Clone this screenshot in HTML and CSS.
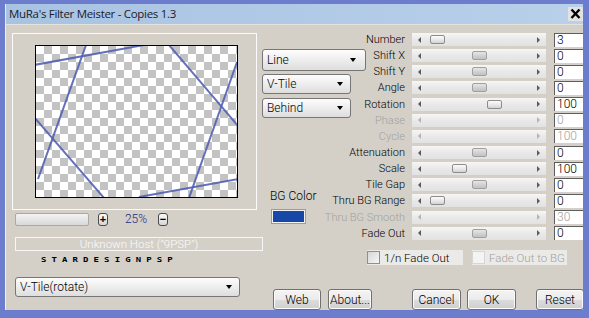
FILE: index.html
```html
<!DOCTYPE html>
<html>
<head>
<meta charset="utf-8">
<link rel="stylesheet" href="styles.css">
</head>
<body>
<div class="window">
  <div class="titlebar">
    <span class="title">MuRa's Filter Meister - Copies 1.3</span>
    <span class="close"><svg width="15" height="14" viewBox="0 0 15 14"><path d="M3.5 2.5 L11.5 11 M11.5 2.5 L3.5 11" stroke="#000" stroke-width="2.4" fill="none"/></svg></span>
  </div>
  <div class="client">
    <div class="left">
      <div class="frame">
        <div class="preview">
          <svg width="201" height="151" viewBox="0 0 201 151">
            <g stroke="#5360b2" stroke-width="2" stroke-opacity="0.9" fill="none">
              <line x1="-2" y1="19" x2="108" y2="-1"/>
              <line x1="50" y1="-1" x2="2" y2="133"/>
              <line x1="133" y1="-1" x2="202" y2="80"/>
              <line x1="201" y1="16" x2="153" y2="152"/>
              <line x1="-1" y1="72" x2="68" y2="152"/>
              <line x1="103" y1="151" x2="202" y2="133"/>
            </g>
          </svg>
        </div>
      </div>
      <div class="zoomrow">
        <div class="zoombar"></div>
        <span class="zbtn">+</span>
        <span class="zpct">25%</span>
        <span class="zbtn">&minus;</span>
      </div>
      <div class="host">Unknown Host ("9PSP")</div>
      <div class="brand">STARDESIGNPSP</div>
      <div class="select sel-wide">V-Tile(rotate)<i class="caret"></i></div>
    </div>
    <div class="right">
      <div class="upper">
        <div class="mid">
          <div class="select sel-line">Line<i class="caret"></i></div>
          <div class="select sel-s">V-Tile<i class="caret"></i></div>
          <div class="select sel-s sel-behind">Behind<i class="caret"></i></div>
          <div class="bg-label">BG Color</div>
          <div class="swatch"></div>
        </div>
        <div class="sliders">
          <div class="row"><span class="lbl">Number</span><div class="track"><i class="al"></i><i class="ar"></i><b class="thumb" style="left:18px"></b></div><span class="val">3</span></div>
          <div class="row"><span class="lbl">Shift X</span><div class="track"><i class="al"></i><i class="ar"></i><b class="thumb dark" style="left:60px"></b></div><span class="val">0</span></div>
          <div class="row"><span class="lbl">Shift Y</span><div class="track"><i class="al"></i><i class="ar"></i><b class="thumb dark" style="left:60px"></b></div><span class="val">0</span></div>
          <div class="row"><span class="lbl">Angle</span><div class="track"><i class="al"></i><i class="ar"></i><b class="thumb dark" style="left:60px"></b></div><span class="val">0</span></div>
          <div class="row"><span class="lbl">Rotation</span><div class="track"><i class="al"></i><i class="ar"></i><b class="thumb" style="left:75px"></b></div><span class="val">100</span></div>
          <div class="row dis"><span class="lbl">Phase</span><div class="track"><i class="al"></i><i class="ar"></i></div><span class="val">0</span></div>
          <div class="row dis"><span class="lbl">Cycle</span><div class="track"><i class="al"></i><i class="ar"></i></div><span class="val">100</span></div>
          <div class="row"><span class="lbl">Attenuation</span><div class="track"><i class="al"></i><i class="ar"></i><b class="thumb dark" style="left:60px"></b></div><span class="val">0</span></div>
          <div class="row"><span class="lbl">Scale</span><div class="track"><i class="al"></i><i class="ar"></i><b class="thumb" style="left:40px"></b></div><span class="val">100</span></div>
          <div class="row"><span class="lbl">Tile Gap</span><div class="track"><i class="al"></i><i class="ar"></i><b class="thumb dark" style="left:60px"></b></div><span class="val">0</span></div>
          <div class="row"><span class="lbl">Thru BG Range</span><div class="track"><i class="al"></i><i class="ar"></i><b class="thumb" style="left:18px"></b></div><span class="val">0</span></div>
          <div class="row dis"><span class="lbl">Thru BG Smooth</span><div class="track"><i class="al"></i><i class="ar"></i></div><span class="val">30</span></div>
          <div class="row"><span class="lbl">Fade Out</span><div class="track"><i class="al"></i><i class="ar"></i><b class="thumb dark" style="left:60px"></b></div><span class="val">0</span></div>
        </div>
      </div>
      <div class="checks">
        <label class="chk"><span class="box"></span>1/n Fade Out</label>
        <label class="chk chk-dis"><span class="box"></span>Fade Out to BG</label>
      </div>
      <div class="buttons">
        <span class="btn b-web">Web</span>
        <span class="btn b-about">About...</span>
        <span class="btn b-cancel">Cancel</span>
        <span class="btn b-ok">OK</span>
        <span class="btn b-reset">Reset</span>
      </div>
    </div>
  </div>
</div>
</body>
</html>
```

FILE: styles.css
```css
* { box-sizing: border-box; }
html, body {
  margin: 0;
  padding: 0;
}
body {
  width: 589px;
  height: 318px;
  overflow: hidden;
  background: #6c7dcd;
  font-family: Roboto, "Liberation Sans", Arial, sans-serif;
  font-size: 11.5px;
  font-weight: 300;
  color: #000;
}
.window {
  width: 589px;
  height: 318px;
  padding: 4px 6px 8px 5px;
  display: flex;
  flex-direction: column;
}
.titlebar {
  height: 20px;
  flex: none;
  display: flex;
  align-items: flex-start;
  justify-content: space-between;
  background: linear-gradient(to right, #a8c3e2, #b9d0ea);
  border-left: 1px solid #e6ecf4;
}
.title {
  font-family: "Open Sans", "Liberation Sans", sans-serif;
  font-weight: 400;
  font-size: 11.5px;
  letter-spacing: -0.3px;
  line-height: 20px;
  padding-left: 3px;
  color: #1a1a2a;
}
.close {
  margin-top: 3px;
  width: 15px;
  height: 14px;
  background: #e2e2e2;
  display: block;
}
.close svg { display: block; }
.client {
  flex: 1;
  display: flex;
  background: #d4d0c8;
  border-left: 1px solid #f2f1ee;
  border-top: 1px solid #e4e2dd;
  overflow: hidden;
}
.left {
  width: 256px;
  flex: none;
  display: flex;
  flex-direction: column;
}
.frame {
  margin: 8px 0 0 6px;
  width: 245px;
  height: 177px;
  border: 1px solid #fbfbfb;
  padding: 11px 0 0 22px;
}
.preview {
  width: 203px;
  height: 153px;
  border: 1px solid #000;
  background: repeating-conic-gradient(#c3c3c3 0 25%, #ffffff 0 50%) 0 0 / 16px 16px;
}
.preview svg { display: block; }
.zoomrow {
  margin: 3px 0 0 9px;
  height: 13px;
  display: flex;
  align-items: center;
}
.zoombar {
  width: 74px;
  height: 13px;
  border: 1px solid #a8a8a8;
  border-radius: 2px;
  background: linear-gradient(#f4f4f4, #d8d8d8);
}
.zbtn {
  margin-left: 9px;
  width: 10px;
  height: 13px;
  border: 1px solid #4a4a4a;
  border-radius: 3px;
  background: linear-gradient(#fafafa, #d6d6d6);
  font-family: "Liberation Sans", sans-serif;
  font-size: 11px;
  font-weight: bold;
  line-height: 11px;
  text-align: center;
}
.zpct {
  width: 50px;
  padding-left: 6px;
  text-align: center;
  color: #1d2a86;
  font-size: 12px;
  line-height: 13px;
}
.zpct + .zbtn { margin-left: 0; }
.host {
  margin: 11px 0 0 9px;
  width: 248px;
  height: 14px;
  border: 1px solid #f6f6f6;
  color: #fbfbfb;
  text-align: center;
  line-height: 12px;
  flex: none;
}
.brand {
  margin: 5px 0 0 35px;
  font-family: "DejaVu Sans Mono", monospace;
  font-weight: bold;
  font-size: 9px;
  letter-spacing: 5.1px;
  line-height: 9px;
  height: 9px;
  transform: scaleY(0.8);
  transform-origin: top left;
}
.select {
  display: flex;
  align-items: center;
  justify-content: space-between;
  height: 20px;
  padding: 0 7px 0 4px;
  border: 1px solid #767676;
  border-radius: 3px;
  background: linear-gradient(#fdfdfd, #ececec 55%, #dedede);
  font-size: 12px;
  flex: none;
}
.caret {
  width: 0;
  height: 0;
  border-left: 3.5px solid transparent;
  border-right: 3.5px solid transparent;
  border-top: 4px solid #000;
}
.sel-wide {
  margin: 12px 0 0 9px;
  width: 225px;
}
.right {
  flex: 1;
  display: flex;
  flex-direction: column;
}
.upper {
  height: 225px;
  display: flex;
  flex: none;
}
.mid {
  width: 68px;
  flex: none;
  display: flex;
  flex-direction: column;
}
.sel-line {
  margin-top: 24px;
  width: 104px;
  height: 22px;
  padding-right: 9px;
}
.sel-s {
  margin-top: 3px;
  width: 89px;
}
.sel-behind { margin-top: 4px; }
.bg-label {
  margin: 72px 0 0 8px;
  line-height: 13px;
  white-space: nowrap;
  font-size: 12px;
}
.swatch {
  margin: 6px 0 0 9px;
  width: 35px;
  height: 15px;
  background: #1748a8;
  border: 1px solid #9c9c9c;
  box-shadow: inset 0 0 0 1px #f2f2f2;
}
.sliders {
  padding-top: 6.5px;
  display: flex;
  flex-direction: column;
}
.row {
  height: 16.15px;
  display: grid;
  grid-template-columns: 75px 134px 29px;
  column-gap: 7px;
  align-items: center;
}
.row > .val { margin-left: 1px; }
.lbl {
  display: flex;
  justify-content: flex-end;
  white-space: nowrap;
  line-height: 13px;
  font-size: 11px;
}
.dis .lbl { color: #a2a2a2; }
.track {
  position: relative;
  height: 13px;
  background: linear-gradient(#f6f6f6, #e9e9e9 50%, #e2e2e2);
  display: flex;
  justify-content: space-between;
  align-items: center;
  padding: 0 6px;
}
.al, .ar {
  width: 0;
  height: 0;
  border-top: 3px solid transparent;
  border-bottom: 3px solid transparent;
}
.al { border-right: 3px solid #5a5a5a; }
.ar { border-left: 3px solid #5a5a5a; }
.dis .al { border-right-color: #b4b4b4; }
.dis .ar { border-left-color: #b4b4b4; }
.thumb {
  position: absolute;
  top: 2px;
  width: 15px;
  height: 9px;
  border: 1px solid #8c8c8c;
  border-radius: 2px;
  background: linear-gradient(#fcfcfc, #e6e6e6 60%, #d2d2d2);
}
.thumb.dark {
  background: linear-gradient(#e6e6e6, #cfcfcf 60%, #c2c2c2);
  border-color: #a0a0a0;
}
.val {
  height: 14px;
  background: #fff;
  border-left: 1px solid #5e5e5e;
  border-top: 1px solid #5e5e5e;
  padding-left: 2px;
  line-height: 13px;
  font-size: 12px;
  width: 32px;
}
.dis .val { color: #a2a2a2; }
.checks {
  height: 15px;
  display: flex;
  padding-left: 105px;
  gap: 9px;
  flex: none;
}
.chk {
  display: flex;
  align-items: center;
  gap: 4px;
  width: 96px;
  height: 15px;
  background: #ebeae7;
  white-space: nowrap;
  font-size: 11.5px;
}
.chk-dis { width: 95px; color: #a2a2a2; }
.box {
  width: 13px;
  height: 13px;
  border: 1px solid #8e8f8f;
  background: linear-gradient(135deg, #d6d6d6, #f6f6f6);
}
.chk-dis .box {
  border-color: #d6d6d6;
  background: #f4f4f4;
}
.buttons {
  margin-top: 24px;
  display: flex;
  height: 21px;
  flex: none;
}
.btn {
  height: 21px;
  border: 1px solid #707070;
  border-radius: 3px;
  background: linear-gradient(#f4f4f4, #ebebeb 50%, #dcdcdc 51%, #cfcfcf);
  box-shadow: inset 0 0 0 1px #fbfbfb;
  display: flex;
  align-items: center;
  justify-content: center;
  font-size: 12px;
  flex: none;
}
.b-web { margin-left: 11px; width: 48px; }
.b-about { margin-left: 7px; width: 44px; }
.b-cancel { margin-left: 40px; width: 49px; }
.b-ok { margin-left: 6px; width: 49px; }
.b-reset { margin-left: 20px; width: 48px; }
```
